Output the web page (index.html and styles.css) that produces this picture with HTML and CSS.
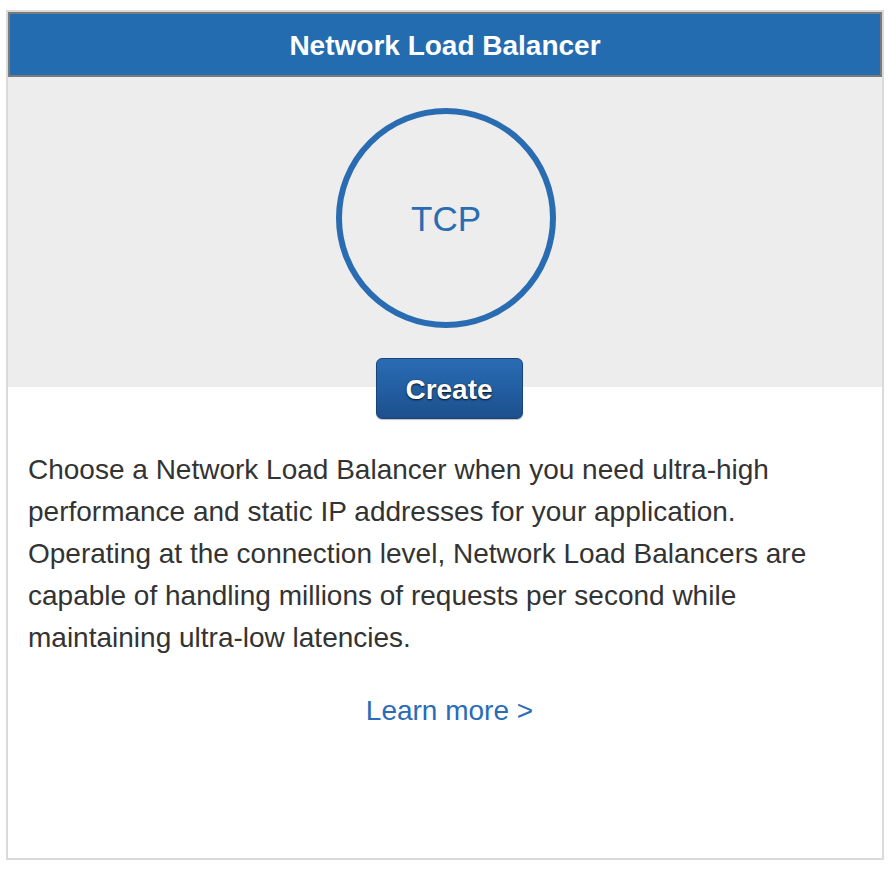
FILE: index.html
```html
<!DOCTYPE html>
<html lang="en">
<head>
<meta charset="utf-8">
<title>Network Load Balancer</title>
<link rel="stylesheet" href="styles.css">
</head>
<body>
<div class="card">
  <div class="card-header">Network Load Balancer</div>
  <div class="hero">
    <div class="protocol">TCP</div>
    <button class="create-btn" type="button">Create</button>
  </div>
  <p class="description">Choose a Network Load Balancer when you need ultra-high performance and static IP addresses for your application. Operating at the connection level, Network Load Balancers are capable of handling millions of requests per second while maintaining ultra-low latencies.</p>
  <div class="learn"><a class="learn-link" href="#">Learn more &gt;</a></div>
</div>
</body>
</html>
```
FILE: styles.css
```css
html, body {
  margin: 0;
  padding: 0;
  background: #fff;
}
body {
  font-family: "Liberation Sans", Arial, Helvetica, sans-serif;
  padding: 10px 0 0 6px;
}
.card {
  box-sizing: border-box;
  width: 878px;
  height: 850px;
  border: 2px solid #dadada;
  background: #fff;
}
.card-header {
  box-sizing: border-box;
  height: 65px;
  border: 2px solid #7a7a7a;
  background: #236cb0;
  color: #fff;
  font-weight: bold;
  font-size: 28px;
  display: flex;
  align-items: center;
  justify-content: center;
  padding-top: 3px;
}
.hero {
  display: flex;
  flex-direction: column;
  align-items: center;
  padding-top: 31px;
  background: linear-gradient(to bottom, #ededed 0, #ededed 310px, #fff 310px);
}
.protocol {
  box-sizing: border-box;
  width: 220px;
  height: 220px;
  border: 6px solid #2a6cb2;
  border-radius: 50%;
  display: flex;
  align-items: center;
  justify-content: center;
  color: #2a6cb2;
  font-size: 35px;
  padding-top: 2px;
  margin-left: 2px;
}
.create-btn {
  box-sizing: border-box;
  margin-top: 30px;
  width: 147px;
  height: 61px;
  border: 1px solid #1a4479;
  border-radius: 6px;
  background: linear-gradient(to bottom, #2a6cb3 0%, #225da0 55%, #1d4f8c 100%);
  color: #fff;
  font-family: "Liberation Sans", Arial, Helvetica, sans-serif;
  font-weight: bold;
  font-size: 28px;
  text-shadow: 0 1px 2px rgba(0, 0, 0, 0.8), 0 0 1px rgba(0, 0, 0, 0.5);
  box-shadow: 0 1px 1px rgba(0, 0, 0, 0.25);
  padding: 2px 0 0;
  margin-left: 8px;
  cursor: pointer;
}
.description {
  margin: 30px 0 0;
  padding: 0 20px;
  color: #333;
  font-size: 28px;
  line-height: 42px;
}
.learn {
  margin-top: 31px;
  text-align: center;
  padding-left: 9px;
  font-size: 28px;
  line-height: 42px;
}
.learn-link {
  color: #2a6cb5;
  text-decoration: none;
}
```
